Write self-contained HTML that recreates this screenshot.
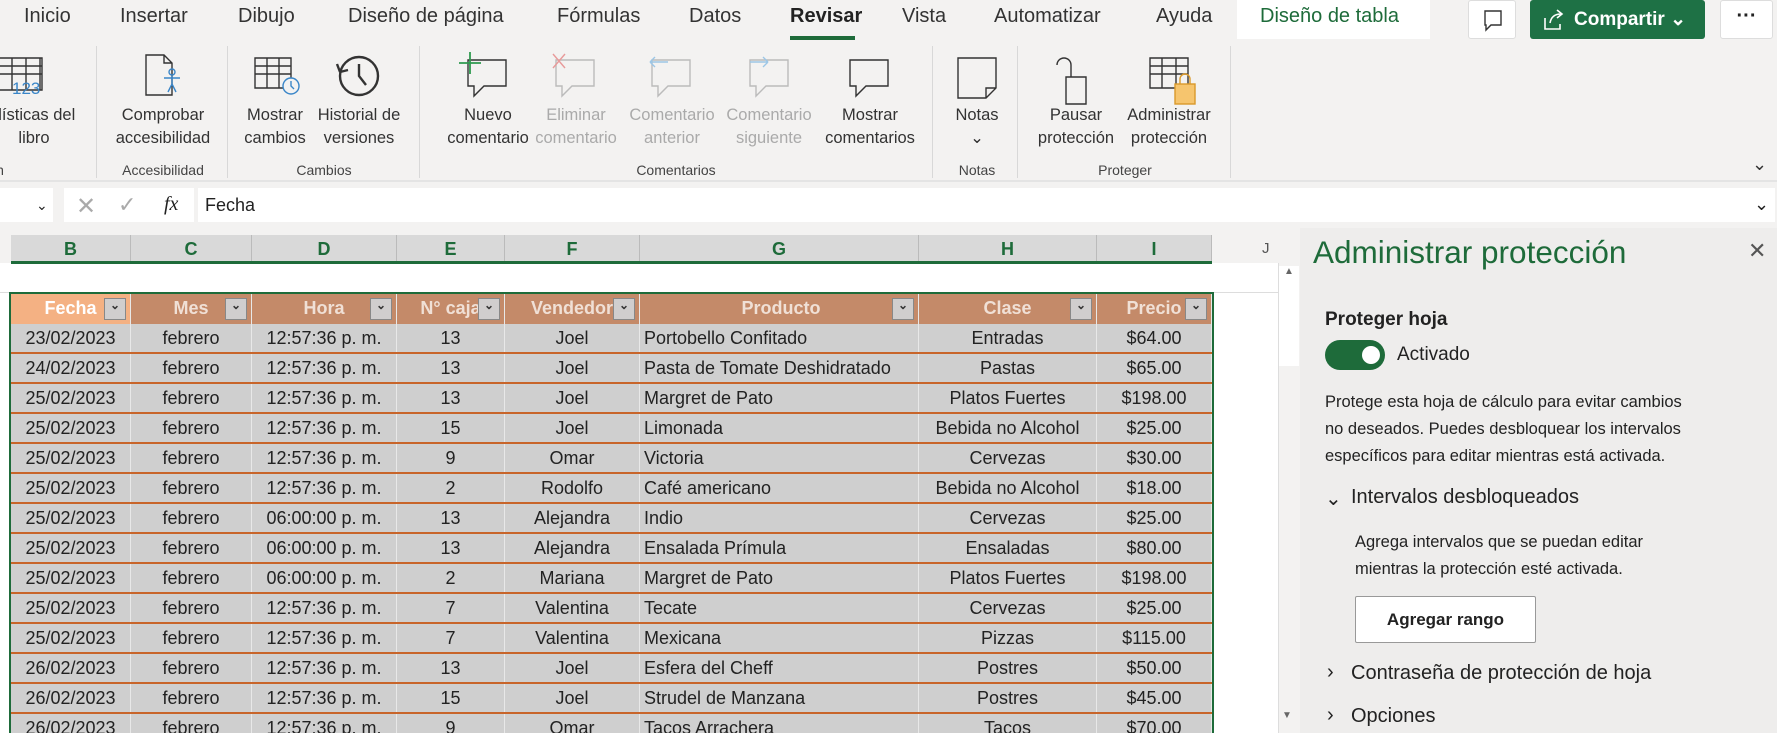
<!DOCTYPE html>
<html style="height:733px;overflow:hidden"><head><meta charset="utf-8"><style>
*{margin:0;padding:0;box-sizing:border-box}
body{width:1777px;height:733px;overflow:hidden;background:#f3f2f1;font-family:"Liberation Sans",sans-serif;position:relative;color:#222}
.a{position:absolute;white-space:nowrap}
.tab{top:5px;font-size:20px;color:#333}
.lbl{font-size:16.5px;text-align:center;line-height:23px;color:#333;transform:translateX(-50%);top:104px}
.dis{color:#aaa}
.gl{top:162px;font-size:14px;color:#444;transform:translateX(-50%)}
.sep{top:46px;width:1px;height:132px;background:#d8d8d8}
.row{position:absolute;left:11px;display:flex;height:30px;width:1201px;border-bottom:2px solid #c8652a;background:#cfcfcf;overflow:hidden}
.row div{font-size:18px;line-height:28px;text-align:center;border-right:1px solid #e8e8e8;overflow:hidden}
.c1{width:120px}.c2{width:121px}.c3{width:145px}.c4{width:108px}.c5{width:135px}.c6{width:279px;text-align:left!important;padding-left:4px}.c7{width:178px}.c8{width:115px}
.hd div{background:#c48a69;color:#f0e0d6;font-weight:bold;position:relative}
.hd div:after{content:"⌄";position:absolute;right:4px;top:4px;width:20px;height:20px;background:#d0cece;border:1px solid #888;color:#333;font-size:12px;line-height:12px}
.ch{top:235px;height:28px;background:#d9d9d9;border-right:1px solid #bbb;color:#1e6b3a;font-weight:bold;font-size:18px;text-align:center;line-height:28px}
</style></head><body>
<div class="a tab" style="left:24px">Inicio</div>
<div class="a tab" style="left:120px">Insertar</div>
<div class="a tab" style="left:238px">Dibujo</div>
<div class="a tab" style="left:348px">Diseño de página</div>
<div class="a tab" style="left:557px">Fórmulas</div>
<div class="a tab" style="left:689px">Datos</div>
<div class="a tab" style="left:790px;font-weight:bold;color:#222">Revisar</div>
<div class="a" style="left:790px;top:36px;width:65px;height:4px;background:#1e6b3a"></div>
<div class="a tab" style="left:902px">Vista</div>
<div class="a tab" style="left:994px">Automatizar</div>
<div class="a tab" style="left:1156px">Ayuda</div>
<div class="a" style="left:1237px;top:0;width:193px;height:39px;background:#fff"></div>
<div class="a tab" style="left:1260px;color:#1e6b3a">Diseño de tabla</div>
<div class="a" style="left:1468px;top:0;width:48px;height:39px;background:#fff;border:1px solid #ddd;border-radius:3px"><svg width="48" height="39"><path d="M16 10h16v14h-10l-5 5v-5h-1z" fill="none" stroke="#333" stroke-width="1.4"/></svg></div>
<div class="a" style="left:1530px;top:0;width:175px;height:39px;background:#1e7145;border-radius:3px;color:#fff;font-weight:bold;font-size:19px;line-height:39px;padding-left:44px">Compartir ⌄
<svg class="a" style="left:12px;top:8px" width="24" height="24"><path d="M3 10v11h15v-5M8 15c1-6 5-9 11-9M15 2l5 4-5 4" fill="none" stroke="#fff" stroke-width="1.6"/></svg></div>
<div class="a" style="left:1720px;top:0;width:53px;height:39px;background:#fff;border:1px solid #ddd;border-radius:3px;text-align:center;font-size:20px;font-weight:bold;line-height:30px">···</div>
<svg class="a" style="left:0;top:50px" width="1777" height="60" fill="none" stroke="#333" stroke-width="1.4">
<path d="M-2 8h44v32H-2M-2 16h44M-2 24h44M12 8v32M26 8v32M40 8v32"/>
<text x="12" y="44" font-size="17" fill="#3a86c8" stroke="none" font-family="Liberation Sans">123</text>
<path d="M146 5h18l8 8v32h-26z M164 5v8h8"/>
<circle cx="172" cy="22" r="3" stroke="#3a86c8"/><path d="M164 28h16M172 26v8l-4 8M172 34l4 8" stroke="#3a86c8"/>
<path d="M255 8h36v30h-36zM255 16h36M255 24h36M267 8v30M279 8v30"/><circle cx="291" cy="36" r="8" stroke="#3a86c8" fill="#f3f2f1"/><path d="M291 31v5l3 3" stroke="#3a86c8"/>
<circle cx="359" cy="26" r="19" stroke-width="2.4"/><path d="M359 14v12l7 9M340 22l-3-8M340 22l8-2" stroke-width="2.4"/>
<path d="M468 10h38v26h-22l-10 10v-10h-6z"/><path d="M470 2v22M459 13h22" stroke="#2e9a4f" stroke-width="1.8"/>
<path d="M556 10h38v26h-22l-10 10v-10h-6z" stroke="#bbb"/><path d="M553 4l12 14M565 4l-12 14" stroke="#e89a9a"/>
<path d="M652 10h38v26h-22l-10 10v-10h-6z" stroke="#bbb"/><path d="M650 12h18M650 12l5-5M650 12l5 5" stroke="#9cc6e6"/>
<path d="M750 10h38v26h-22l-10 10v-10h-6z" stroke="#bbb"/><path d="M750 12h18M768 12l-5-5M768 12l-5 5" stroke="#9cc6e6"/>
<path d="M850 10h38v26h-22l-10 10v-10h-6z"/>
<path d="M958 8h38v30l-10 10h-28z M986 48v-10h10"/>
<path d="M1057 15a7 7 0 0 1 14 0v12M1066 27h20v27h-20z"/>
<path d="M1150 8h38v30h-38zM1150 16h38M1150 24h38M1162 8v30M1176 8v30"/><rect x="1175" y="34" width="20" height="20" fill="#f6c56e" stroke="#d9992b"/><path d="M1180 34v-5a5 5 0 0 1 10 0v5" stroke="#d9992b"/>
</svg>
<div class="a lbl" style="left:34px">dísticas del<br>libro</div>
<div class="a lbl" style="left:163px">Comprobar<br>accesibilidad</div>
<div class="a lbl" style="left:275px">Mostrar<br>cambios</div>
<div class="a lbl" style="left:359px">Historial de<br>versiones</div>
<div class="a lbl" style="left:488px">Nuevo<br>comentario</div>
<div class="a lbl dis" style="left:576px">Eliminar<br>comentario</div>
<div class="a lbl dis" style="left:672px">Comentario<br>anterior</div>
<div class="a lbl dis" style="left:769px">Comentario<br>siguiente</div>
<div class="a lbl" style="left:870px">Mostrar<br>comentarios</div>
<div class="a lbl" style="left:977px">Notas<br>⌄</div>
<div class="a lbl" style="left:1076px">Pausar<br>protección</div>
<div class="a lbl" style="left:1169px">Administrar<br>protección</div>
<div class="a gl" style="left:0px">n</div>
<div class="a gl" style="left:163px">Accesibilidad</div>
<div class="a gl" style="left:324px">Cambios</div>
<div class="a gl" style="left:676px">Comentarios</div>
<div class="a gl" style="left:977px">Notas</div>
<div class="a gl" style="left:1125px">Proteger</div>
<div class="a sep" style="left:96px"></div><div class="a sep" style="left:227px"></div><div class="a sep" style="left:419px"></div><div class="a sep" style="left:932px"></div><div class="a sep" style="left:1017px"></div><div class="a sep" style="left:1230px"></div>
<div class="a" style="left:1752px;top:154px;font-size:18px;color:#333">⌄</div>
<div class="a" style="left:0;top:180px;width:1777px;height:2px;background:#e4e4e4"></div>
<div class="a" style="left:0;top:188px;width:53px;height:34px;background:#fff;font-size:14px;line-height:34px;padding-left:36px">⌄</div>
<div class="a" style="left:64px;top:188px;width:130px;height:34px;background:#fff"></div>
<div class="a" style="left:76px;top:192px;font-size:24px;color:#aaa">✕</div>
<div class="a" style="left:118px;top:192px;font-size:22px;color:#aaa">✓</div>
<div class="a" style="left:164px;top:193px;font-size:20px;font-style:italic;font-family:'Liberation Serif',serif">fx</div>
<div class="a" style="left:198px;top:188px;width:1577px;height:34px;background:#fff;font-size:18px;line-height:34px;padding-left:7px">Fecha</div>
<div class="a" style="left:1754px;top:194px;font-size:18px">⌄</div>
<div class="a" style="left:0;top:263px;width:1300px;height:470px;background:#fff"></div>
<div class="a ch" style="left:11px;width:120px">B</div><div class="a ch" style="left:131px;width:121px">C</div><div class="a ch" style="left:252px;width:145px">D</div><div class="a ch" style="left:397px;width:108px">E</div><div class="a ch" style="left:505px;width:135px">F</div><div class="a ch" style="left:640px;width:279px">G</div><div class="a ch" style="left:919px;width:178px">H</div><div class="a ch" style="left:1097px;width:115px">I</div>
<div class="a" style="left:1212px;top:235px;width:88px;height:28px;background:#f3f2f1;color:#555;font-size:15px;line-height:28px;padding-left:50px">J</div>
<div class="a" style="left:11px;top:261px;width:1201px;height:3px;background:#1e6b3a"></div>
<div class="a" style="left:0;top:263px;width:1278px;height:30px;border-bottom:1px solid #ddd"></div>
<div class="a" style="left:1278px;top:263px;width:22px;height:470px;background:#f3f2f1;border-left:1px solid #ddd"></div>
<div class="a" style="left:1279px;top:266px;width:20px;height:100px;background:#fff;font-size:10px;color:#666;text-align:center">▲</div>
<div class="a" style="left:1282px;top:710px;font-size:10px;color:#666">▼</div>
<div class="a" style="left:9px;top:292px;width:1205px;height:441px;border:2px solid #1e6b3a;border-bottom:none;z-index:2"></div>
<div class="row hd" style="top:294px;height:30px;border-bottom:none"><div class="c1" style="background:#f4b183;color:#fff">Fecha</div><div class="c2">Mes</div><div class="c3">Hora</div><div class="c4">N° caja</div><div class="c5">Vendedor</div><div class="c6" style="text-align:center!important">Producto</div><div class="c7">Clase</div><div class="c8">Precio</div></div>
<div class="row" style="top:324px"><div class="c1">23/02/2023</div><div class="c2">febrero</div><div class="c3">12:57:36 p. m.</div><div class="c4">13</div><div class="c5">Joel</div><div class="c6">Portobello Confitado</div><div class="c7">Entradas</div><div class="c8">$64.00</div></div>
<div class="row" style="top:354px"><div class="c1">24/02/2023</div><div class="c2">febrero</div><div class="c3">12:57:36 p. m.</div><div class="c4">13</div><div class="c5">Joel</div><div class="c6">Pasta de Tomate Deshidratado</div><div class="c7">Pastas</div><div class="c8">$65.00</div></div>
<div class="row" style="top:384px"><div class="c1">25/02/2023</div><div class="c2">febrero</div><div class="c3">12:57:36 p. m.</div><div class="c4">13</div><div class="c5">Joel</div><div class="c6">Margret de Pato</div><div class="c7">Platos Fuertes</div><div class="c8">$198.00</div></div>
<div class="row" style="top:414px"><div class="c1">25/02/2023</div><div class="c2">febrero</div><div class="c3">12:57:36 p. m.</div><div class="c4">15</div><div class="c5">Joel</div><div class="c6">Limonada</div><div class="c7">Bebida no Alcohol</div><div class="c8">$25.00</div></div>
<div class="row" style="top:444px"><div class="c1">25/02/2023</div><div class="c2">febrero</div><div class="c3">12:57:36 p. m.</div><div class="c4">9</div><div class="c5">Omar</div><div class="c6">Victoria</div><div class="c7">Cervezas</div><div class="c8">$30.00</div></div>
<div class="row" style="top:474px"><div class="c1">25/02/2023</div><div class="c2">febrero</div><div class="c3">12:57:36 p. m.</div><div class="c4">2</div><div class="c5">Rodolfo</div><div class="c6">Café americano</div><div class="c7">Bebida no Alcohol</div><div class="c8">$18.00</div></div>
<div class="row" style="top:504px"><div class="c1">25/02/2023</div><div class="c2">febrero</div><div class="c3">06:00:00 p. m.</div><div class="c4">13</div><div class="c5">Alejandra</div><div class="c6">Indio</div><div class="c7">Cervezas</div><div class="c8">$25.00</div></div>
<div class="row" style="top:534px"><div class="c1">25/02/2023</div><div class="c2">febrero</div><div class="c3">06:00:00 p. m.</div><div class="c4">13</div><div class="c5">Alejandra</div><div class="c6">Ensalada Prímula</div><div class="c7">Ensaladas</div><div class="c8">$80.00</div></div>
<div class="row" style="top:564px"><div class="c1">25/02/2023</div><div class="c2">febrero</div><div class="c3">06:00:00 p. m.</div><div class="c4">2</div><div class="c5">Mariana</div><div class="c6">Margret de Pato</div><div class="c7">Platos Fuertes</div><div class="c8">$198.00</div></div>
<div class="row" style="top:594px"><div class="c1">25/02/2023</div><div class="c2">febrero</div><div class="c3">12:57:36 p. m.</div><div class="c4">7</div><div class="c5">Valentina</div><div class="c6">Tecate</div><div class="c7">Cervezas</div><div class="c8">$25.00</div></div>
<div class="row" style="top:624px"><div class="c1">25/02/2023</div><div class="c2">febrero</div><div class="c3">12:57:36 p. m.</div><div class="c4">7</div><div class="c5">Valentina</div><div class="c6">Mexicana</div><div class="c7">Pizzas</div><div class="c8">$115.00</div></div>
<div class="row" style="top:654px"><div class="c1">26/02/2023</div><div class="c2">febrero</div><div class="c3">12:57:36 p. m.</div><div class="c4">13</div><div class="c5">Joel</div><div class="c6">Esfera del Cheff</div><div class="c7">Postres</div><div class="c8">$50.00</div></div>
<div class="row" style="top:684px"><div class="c1">26/02/2023</div><div class="c2">febrero</div><div class="c3">12:57:36 p. m.</div><div class="c4">15</div><div class="c5">Joel</div><div class="c6">Strudel de Manzana</div><div class="c7">Postres</div><div class="c8">$45.00</div></div>
<div class="row" style="top:714px;height:19px;border-bottom:none"><div class="c1">26/02/2023</div><div class="c2">febrero</div><div class="c3">12:57:36 p. m.</div><div class="c4">9</div><div class="c5">Omar</div><div class="c6">Tacos Arrachera</div><div class="c7">Tacos</div><div class="c8">$70.00</div></div>
<div class="a" style="left:1300px;top:228px;width:477px;height:505px;background:#eeedec"></div>
<div class="a" style="left:1313px;top:234px;font-size:31.5px;color:#1e6b3a">Administrar protección</div>
<div class="a" style="left:1748px;top:238px;font-size:22px;color:#555">✕</div>
<div class="a" style="left:1325px;top:309px;font-size:19px;font-weight:bold">Proteger hoja</div>
<div class="a" style="left:1325px;top:340px;width:60px;height:30px;border-radius:15px;background:#1e6b3a"></div>
<div class="a" style="left:1362px;top:346px;width:18px;height:18px;border-radius:50%;background:#fff"></div>
<div class="a" style="left:1397px;top:344px;font-size:19px">Activado</div>
<div class="a" style="left:1325px;top:389px;font-size:16.5px;line-height:27px">Protege esta hoja de cálculo para evitar cambios<br>no deseados. Puedes desbloquear los intervalos<br>específicos para editar mientras está activada.</div>
<div class="a" style="left:1325px;top:486px;font-size:20px">⌄</div>
<div class="a" style="left:1351px;top:486px;font-size:20px">Intervalos desbloqueados</div>
<div class="a" style="left:1355px;top:529px;font-size:16.5px;line-height:27px">Agrega intervalos que se puedan editar<br>mientras la protección esté activada.</div>
<div class="a" style="left:1355px;top:596px;width:181px;height:47px;background:#fff;border:1px solid #999;border-radius:2px;font-size:17px;font-weight:bold;text-align:center;line-height:45px">Agregar rango</div>
<div class="a" style="left:1327px;top:661px;font-size:20px">›</div>
<div class="a" style="left:1351px;top:662px;font-size:20px">Contraseña de protección de hoja</div>
<div class="a" style="left:1327px;top:704px;font-size:20px">›</div>
<div class="a" style="left:1351px;top:705px;font-size:20px">Opciones</div>
</body></html>
